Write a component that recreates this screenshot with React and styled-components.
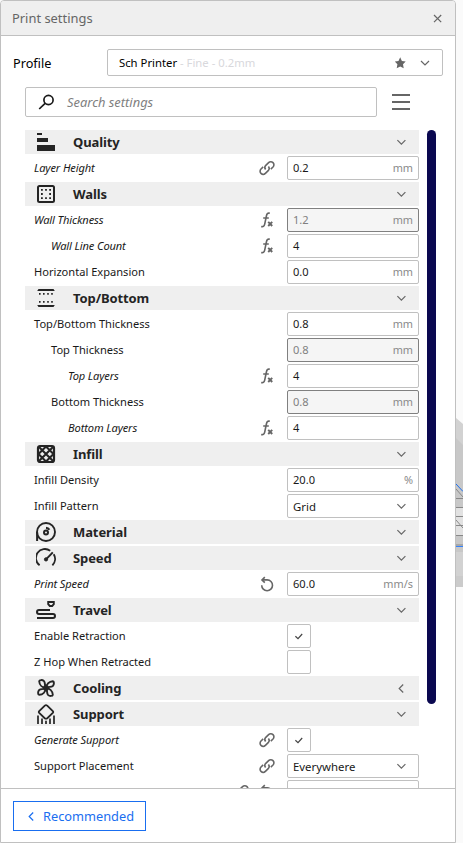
import React from "react";
import styled, { createGlobalStyle, css } from "styled-components";

const Global = createGlobalStyle`
  *, *::before, *::after { box-sizing: border-box; }
  html, body { margin: 0; padding: 0; }
  body {
    background: #fafafa;
    color: #191919;
    font-family: "Noto Sans", "Open Sans", sans-serif;
    overflow: hidden;
  }
`;

const Screen = styled.div`
  display: flex;
  width: 463px;
  height: 843px;
  overflow: hidden;
`;

const Panel = styled.section`
  display: flex;
  flex-direction: column;
  flex: none;
  width: 456px;
  height: 843px;
  background: #fff;
  border: 1px solid #c0c0c0;
  border-radius: 4px 4px 0 0;
  overflow: hidden;
`;

const TitleBar = styled.header`
  display: flex;
  align-items: center;
  justify-content: space-between;
  flex: none;
  height: 35px;
  padding: 0 13px 0 11px;
  background: #efefef;
  border-bottom: 1px solid #c0c0c0;
  color: #666;
  font-size: 12.9px;
`;

const ProfileRow = styled.div`
  display: flex;
  align-items: center;
  flex: none;
  height: 27px;
  margin: 13px 12px 0;
`;

const ProfileLabel = styled.label`
  width: 94px;
  font-size: 12.7px;
  color: #000;
`;

const ProfileSelect = styled.div`
  display: flex;
  align-items: center;
  width: 336px;
  height: 27px;
  padding: 0 12px 0 11px;
  border: 1px solid #c0c0c0;
  border-radius: 2px;
  font-size: 11.3px;
  color: #000;
  white-space: pre;
`;

const ProfileDetail = styled.span`
  flex: 1;
  color: #d8d8dc;
`;

const SearchRow = styled.div`
  display: flex;
  align-items: center;
  flex: none;
  gap: 15px;
  height: 30px;
  margin: 11px 24px 12px;
`;

const SearchBox = styled.div`
  display: flex;
  align-items: center;
  width: 352px;
  height: 30px;
  padding-left: 12px;
  gap: 12px;
  border: 1px solid #c0c0c0;
  border-radius: 2px;
  color: #808080;
  font-size: 12.9px;
  font-style: italic;
`;

const ListArea = styled.div`
  display: flex;
  flex: 1;
  min-height: 0;
  padding-left: 24px;
  gap: 8px;
  overflow: hidden;
`;

const List = styled.div`
  display: flex;
  flex-direction: column;
  gap: 2px;
  width: 394px;
  padding-top: 1px;
`;

const Scrollbar = styled.div`
  width: 9px;
  height: 574px;
  margin-top: 0.5px;
  border-radius: 5px;
  background: #0a0850;
`;

const Category = styled.div`
  display: flex;
  align-items: center;
  flex: none;
  height: 24px;
  padding: 0 12px 0 11px;
  background: #efefef;
  color: #242424;
`;

const CategoryName = styled.span`
  flex: 1;
  margin-left: 17px;
  font-size: 13px;
  line-height: 24px;
  font-weight: 700;
  letter-spacing: -0.1px;
`;

const Row = styled.div`
  display: flex;
  align-items: center;
  flex: none;
  height: 24px;
`;

const RowLabel = styled.span`
  flex: 1;
  padding-left: ${(p) => 9 + p.$depth * 17}px;
  font-size: 11.1px;
  line-height: 24px;
  white-space: nowrap;
  ${(p) =>
    p.$italic &&
    css`
      font-style: italic;
      letter-spacing: -0.12px;
    `}
`;

const Markers = styled.span`
  display: flex;
  gap: 10px;
  margin-right: 12px;
  color: #666;
`;

const controlFrame = css`
  display: flex;
  align-items: center;
  flex: none;
  height: 24px;
  border: 1px solid #c0c0c0;
  border-radius: 2px;
  background: #fff;
`;

const Field = styled.div`
  ${controlFrame}
  justify-content: space-between;
  width: 132px;
  padding: 0 5px;
  font-size: 11.1px;
  line-height: 21px;
  ${(p) =>
    p.$disabled &&
    css`
      border-color: #808080;
      background: #f5f5f5;
      color: #808080;
    `}
  span {
    align-self: flex-start;
  }
`;

const Unit = styled.span`
  color: #8a8a8a;
  font-size: 10.9px;
`;

const Dropdown = styled(Field)`
  padding-right: 11px;
  font-size: 11.4px;
  line-height: 24px;
`;

const CheckSlot = styled.div`
  width: 132px;
`;

const Checkbox = styled.div`
  ${controlFrame}
  justify-content: center;
  width: 24px;
`;

const Footer = styled.footer`
  display: flex;
  align-items: flex-start;
  flex: none;
  height: 54px;
  padding: 12px;
  border-top: 1px solid #c0c0c0;
`;

const RecommendedButton = styled.button`
  display: flex;
  align-items: center;
  width: 133px;
  height: 30px;
  padding: 0 0 0 12px;
  gap: 6px;
  border: 1px solid #196ef0;
  background: #fff;
  color: #196ef0;
  font: 12.8px "Noto Sans", sans-serif;
`;

const Icon = styled.svg`
  display: block;
  flex: none;
  fill: none;
  stroke: currentColor;
  stroke-width: ${(p) => p.$weight || 2};
`;

const Chevron = ({ left, size = 11, color = "#666" }) => (
  <Icon width={size} height={size} viewBox="0 0 11 11" $weight={1.2} color={color}>
    <path d={left ? "M7.2 1.5 L3.2 5.5 L7.2 9.5" : "M1.4 3.2 L5.4 7.2 L9.4 3.2"} />
  </Icon>
);

const CheckMark = () => (
  <Icon width="10" height="10" viewBox="0 0 10 10" $weight={1.2} color="#444">
    <path d="M1.4 5.2 L4 7.6 L8.2 3" />
  </Icon>
);

const categoryArt = {
  Quality: (
    <path fill="currentColor" stroke="none" d="M1 1h5v2H1z M1 6h11v4H1z M1 13h18v6H1z" />
  ),
  Walls: (
    <>
      <rect x="2" y="2" width="16" height="16" rx="1.5" />
      <path
        fill="currentColor"
        stroke="none"
        d="M5 5h1.8v1.8H5z M9.1 5h1.8v1.8H9.1z M13.2 5H15v1.8h-1.8z M5 9.1h1.8v1.8H5z M13.2 9.1H15v1.8h-1.8z M5 13.2h1.8V15H5z M9.1 13.2h1.8V15H9.1z M13.2 13.2H15V15h-1.8z"
      />
    </>
  ),
  "Top/Bottom": (
    <path
      fill="currentColor"
      stroke="none"
      d="M2.5 1h15l1.3 2H1.2z M1.2 17h17.6l-1.3 2h-15z M3 5h1.6v1.8H3z M7 5h1.6v1.8H7z M11.2 5h1.6v1.8h-1.6z M15.2 5h1.6v1.8h-1.6z M3 13h1.6v1.8H3z M7 13h1.6v1.8H7z M11.2 13h1.6v1.8h-1.6z M15.2 13h1.6v1.8h-1.6z"
    />
  ),
  Infill: (
    <>
      <rect x="2" y="2" width="16" height="16" rx="2" strokeWidth="2.2" />
      <path d="M2.5 10 L10 2.5 L17.5 10 L10 17.5z M3 3 L17 17 M17 3 L3 17" strokeWidth="2.1" />
    </>
  ),
  Material: (
    <>
      <circle cx="10" cy="10" r="9" strokeWidth="1.9" />
      <path d="M1.1 10 V19" />
      <circle cx="10" cy="10.6" r="2" strokeWidth="2" />
      <path d="M10 5.9 Q12.3 6 13.4 7.8" strokeWidth="2.1" />
    </>
  ),
  Speed: (
    <>
      <path d="M3.6 17.3 A9 9 0 0 1 14.2 2.7 M17.7 6.2 A9 9 0 0 1 16.4 17.3" strokeWidth="1.9" />
      <path d="M10 11.4 L16.8 4.4" />
      <circle cx="10" cy="11.4" r="1.6" fill="currentColor" strokeWidth="1" />
    </>
  ),
  Travel: (
    <>
      <path d="M12.2 2 h5.6 v2.2 L16.2 6 h-2.4 L12.2 4.2z" strokeWidth="1.9" />
      <path d="M14 10 H3 a2 2 0 0 0 0 4 H17 a2 2 0 0 1 0 4 H1" />
    </>
  ),
  Cooling: (
    <g strokeWidth="1.9" strokeLinejoin="round">
      {[0, 90, 180, 270].map((a) => (
        <path
          key={a}
          transform={`rotate(${a} 10 10)`}
          d="M10 10 C6.2 9.6 3.4 6.8 3.2 3.2 C3.4 1.8 6.4 1.6 8 3.2 C9.6 5 8.2 7 10 10z"
        />
      ))}
      <circle cx="10" cy="10" r="2" fill="currentColor" />
    </g>
  ),
  Support: (
    <>
      <path d="M11.2 1.6 L16.8 7.1 Q17.6 8 16.8 8.9 L11.3 14.2 Q10 15.2 8.7 14.2 L3.2 8.9 Q2.4 8 3.2 7.1 L8.8 1.6 Q10 .6 11.2 1.6z" strokeWidth="1.8" />
      <path d="M2 11.5 V20 M6 14.5 V20 M14 14.5 V20 M18 11.5 V20 M10 16.8 V20" strokeWidth="1.7" />
    </>
  ),
};

const LinkIcon = () => (
  <Icon width="16" height="16" viewBox="0 0 16 16" $weight={1.6}>
    <path d="M6.6 9.5 A3.2 3.2 0 0 1 6.8 5.3 L9.6 2.6 A3.1 3.1 0 0 1 14 7 L11.8 9.1" />
    <path d="M9.4 6.5 A3.2 3.2 0 0 1 9.2 10.7 L6.4 13.4 A3.1 3.1 0 0 1 2 9 L4.2 6.9" />
  </Icon>
);

const FormulaIcon = () => (
  <Icon width="16" height="16" viewBox="0 0 16 16" $weight={1.6}>
    <path d="M10.8 1.3 C8.6 .6 7.8 2 7.4 4 L5.7 12.2 C5.2 14.4 4 15 2.2 14.4 M4.2 6 H9.8" />
    <path d="M9.2 9.8 L13.2 14 M13.2 9.8 L9.2 14" strokeWidth="1.9" />
  </Icon>
);

const ResetIcon = () => (
  <Icon width="16" height="16" viewBox="0 0 16 16" $weight={1.6}>
    <path d="M2.7 9.3 A5.4 5.4 0 1 0 8.2 3.9 H3.5" />
    <path d="M5.8 1.2 L3 3.9 L5.8 6.6" />
  </Icon>
);

const markerIcons = { link: LinkIcon, fx: FormulaIcon, reset: ResetIcon };

const settings = [
  { category: "Quality" },
  { label: "Layer Height", italic: true, markers: ["link"], value: "0.2", unit: "mm" },
  { category: "Walls" },
  { label: "Wall Thickness", italic: true, markers: ["fx"], value: "1.2", unit: "mm", disabled: true },
  { label: "Wall Line Count", italic: true, depth: 1, markers: ["fx"], value: "4" },
  { label: "Horizontal Expansion", value: "0.0", unit: "mm" },
  { category: "Top/Bottom" },
  { label: "Top/Bottom Thickness", value: "0.8", unit: "mm" },
  { label: "Top Thickness", depth: 1, value: "0.8", unit: "mm", disabled: true },
  { label: "Top Layers", italic: true, depth: 2, markers: ["fx"], value: "4" },
  { label: "Bottom Thickness", depth: 1, value: "0.8", unit: "mm", disabled: true },
  { label: "Bottom Layers", italic: true, depth: 2, markers: ["fx"], value: "4" },
  { category: "Infill" },
  { label: "Infill Density", value: "20.0", unit: "%" },
  { label: "Infill Pattern", option: "Grid" },
  { category: "Material" },
  { category: "Speed" },
  { label: "Print Speed", italic: true, markers: ["reset"], value: "60.0", unit: "mm/s" },
  { category: "Travel" },
  { label: "Enable Retraction", checked: true },
  { label: "Z Hop When Retracted", checked: false },
  { category: "Cooling", collapsed: true },
  { category: "Support" },
  { label: "Generate Support", italic: true, markers: ["link"], checked: true },
  { label: "Support Placement", markers: ["link"], option: "Everywhere" },
  { label: "", markers: ["link", "reset"], value: "" },
];

function Control({ item }) {
  if (item.checked !== undefined) {
    return (
      <CheckSlot>
        <Checkbox>{item.checked && <CheckMark />}</Checkbox>
      </CheckSlot>
    );
  }
  if (item.option) {
    return (
      <Dropdown>
        <span>{item.option}</span>
        <Chevron />
      </Dropdown>
    );
  }
  return (
    <Field $disabled={item.disabled}>
      <span>{item.value}</span>
      {item.unit && <Unit>{item.unit}</Unit>}
    </Field>
  );
}

function Setting({ item }) {
  if (item.category) {
    return (
      <Category>
        <Icon width="20" height="20" viewBox="0 0 20 20">
          {categoryArt[item.category]}
        </Icon>
        <CategoryName>{item.category}</CategoryName>
        <Chevron left={item.collapsed} />
      </Category>
    );
  }
  return (
    <Row>
      <RowLabel $depth={item.depth || 0} $italic={item.italic}>
        {item.label}
      </RowLabel>
      {item.markers && (
        <Markers>
          {item.markers.map((name) => {
            const Marker = markerIcons[name];
            return <Marker key={name} />;
          })}
        </Markers>
      )}
      <Control item={item} />
    </Row>
  );
}

const Viewport = () => (
  <svg width="7" height="843" viewBox="0 0 7 843">
    <path d="M0 418 L7 424 V587 H0z" fill="#d2d2d2" />
    <path d="M0 438 L7 445 V552 H0z" fill="#c8c8c8" />
    <path d="M0 508 H7 V535 H0z" fill="#e2e2e2" />
    <path d="M0 576 H7 V587 H0z" fill="#cbcbcb" />
    <path d="M0 489 L7 497 M0 498.5 H7 M0 507.5 H7 M0 516.5 H7 M0 520 L7 528 M0 525.5 H7 M0 535.5 H7 M0 545 H7" stroke="#888" fill="none" />
    <path d="M0 484 L7 491.5" stroke="#196ef0" />
    <path d="M0 546.5 H7" stroke="#3282ff" />
  </svg>
);

export default function App() {
  return (
    <>
      <Global />
      <Screen>
        <Panel>
          <TitleBar>
            <span>Print settings</span>
            <Icon width="9" height="9" viewBox="0 0 9 9" $weight={1.2}>
              <path d="M1 1 L8.2 8.2 M8.2 1 L1 8.2" />
            </Icon>
          </TitleBar>
          <ProfileRow>
            <ProfileLabel>Profile</ProfileLabel>
            <ProfileSelect>
              <span>Sch Printer</span>
              <ProfileDetail> - Fine - 0.2mm</ProfileDetail>
              <Icon width="35" height="12" viewBox="0 0 35 12" color="#666">
                <path
                  fill="currentColor"
                  stroke="none"
                  d="M5.2 .3 L6.9 4 L10.7 4.5 L8 7.3 L8.7 11.3 L5.2 9.4 L1.7 11.3 L2.4 7.3 L-.3 4.5 L3.5 4z"
                />
                <path d="M26 4 L30 8 L34 4" strokeWidth="1.2" />
              </Icon>
            </ProfileSelect>
          </ProfileRow>
          <SearchRow>
            <SearchBox>
              <Icon width="17" height="16" viewBox="0 0 17 16" color="#191919" $weight={1.7}>
                <circle cx="10.5" cy="6" r="4.6" />
                <path d="M7.1 9.4 L1.2 15" />
              </Icon>
              <span>Search settings</span>
            </SearchBox>
            <Icon width="18" height="16" viewBox="0 0 18 16" color="#666">
              <path d="M0 1 H18 M0 8 H18 M0 15 H18" />
            </Icon>
          </SearchRow>
          <ListArea>
            <List>
              {settings.map((item, i) => (
                <Setting key={i} item={item} />
              ))}
            </List>
            <Scrollbar />
          </ListArea>
          <Footer>
            <RecommendedButton>
              <Chevron left color="#196ef0" />
              Recommended
            </RecommendedButton>
          </Footer>
        </Panel>
        <Viewport />
      </Screen>
    </>
  );
}
